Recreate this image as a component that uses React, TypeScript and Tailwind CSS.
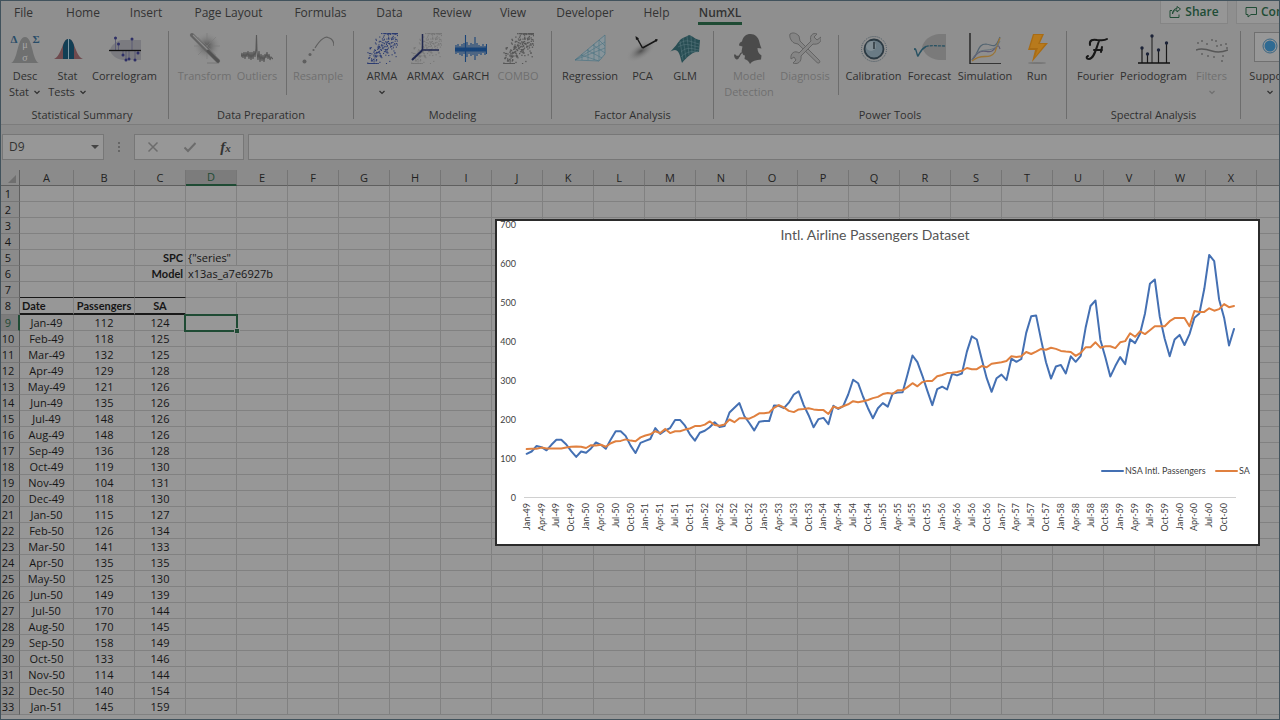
import type { ReactNode } from "react";

/* ---------- data ---------- */

const NSA = [
  112, 118, 132, 129, 121, 135, 148, 148, 136, 119, 104, 118,
  115, 126, 141, 135, 125, 149, 170, 170, 158, 133, 114, 140,
  145, 150, 178, 163, 172, 178, 199, 199, 184, 162, 146, 166,
  171, 180, 193, 181, 183, 218, 230, 242, 209, 191, 172, 194,
  196, 196, 236, 235, 229, 243, 264, 272, 237, 211, 180, 201,
  204, 188, 235, 227, 234, 264, 302, 293, 259, 229, 203, 229,
  242, 233, 267, 269, 270, 315, 364, 347, 312, 274, 237, 278,
  284, 277, 317, 313, 318, 374, 413, 405, 355, 306, 271, 306,
  315, 301, 356, 348, 355, 422, 465, 467, 404, 347, 305, 336,
  340, 318, 362, 348, 363, 435, 491, 505, 404, 359, 310, 337,
  360, 342, 406, 396, 420, 472, 548, 559, 463, 407, 362, 405,
  417, 391, 419, 461, 472, 535, 622, 606, 508, 461, 390, 432,
];

const SA = [
  124, 125, 125, 128, 126, 126, 126, 126, 128, 130, 131, 130,
  127, 134, 133, 135, 130, 139, 144, 145, 149, 146, 144, 154,
  159, 162, 170, 165, 176, 165, 170, 170, 174, 177, 183, 183,
  187, 195, 186, 184, 187, 200, 193, 203, 203, 202, 208, 216,
  216, 218, 230, 237, 231, 222, 219, 226, 227, 229, 226, 224,
  224, 214, 233, 229, 234, 239, 247, 244, 247, 250, 255, 258,
  265, 268, 266, 275, 275, 283, 293, 285, 296, 299, 299, 311,
  314, 319, 320, 322, 325, 332, 329, 329, 337, 334, 343, 345,
  347, 350, 362, 360, 362, 373, 368, 374, 381, 379, 384, 381,
  376, 374, 373, 363, 371, 385, 385, 398, 384, 388, 388, 383,
  398, 401, 421, 412, 426, 419, 429, 439, 439, 439, 452, 460,
  460, 460, 439, 478, 476, 476, 485, 479, 483, 496, 488, 491,
];

const MONTHS = ["Jan", "Feb", "Mar", "Apr", "May", "Jun", "Jul", "Aug", "Sep", "Oct", "Nov", "Dec"];
const monthLabel = (i: number) => `${MONTHS[i % 12]}-${49 + Math.floor(i / 12)}`;

const COLUMNS = "ABCDEFGHIJKLMNOPQRSTUVWX".split("");
const ROWS = Array.from({ length: 33 }, (_, i) => i + 1);

/* ---------- icons ---------- */

function Icon({ children }: { children: ReactNode }) {
  return (
    <svg className="h-8 w-8" viewBox="0 0 32 32" fill="none" aria-hidden="true">
      {children}
    </svg>
  );
}

function makeCloud(count: number, seed: number) {
  let s = seed;
  const next = () => {
    s = (s * 16807) % 2147483647;
    return s / 2147483647;
  };
  return Array.from({ length: count }, () => {
    const x = next() * 30 + 1;
    const spread = (next() + next() + next() - 1.5) * 17;
    const y = Math.min(31, Math.max(1, 32 - x * 0.95 + spread));
    return [x, y] as const;
  });
}
const CLOUD = makeCloud(230, 4321);

function Cloud({ color, size = 1.1 }: { color: string; size?: number }) {
  return (
    <g fill={color}>
      {CLOUD.map(([x, y], i) => (
        <rect key={i} x={x} y={y} width={size} height={size} />
      ))}
    </g>
  );
}

const DescIcon = () => (
  <Icon>
    <path d="M2 31C9 29 8 5 16 5S23 29 30 31Z" fill="#6f7070" />
    <text x="16" y="16" textAnchor="middle" fontSize="10" fill="#a8a8a8" fontFamily="Liberation Serif">μ</text>
    <text x="16" y="29" textAnchor="middle" fontSize="10" fill="#a8a8a8" fontFamily="Liberation Serif">σ</text>
    <text x="5" y="11" textAnchor="middle" fontSize="11" fontWeight="700" fill="#284c68" fontFamily="Liberation Serif">Δ</text>
    <text x="27" y="11" textAnchor="middle" fontSize="11" fontWeight="700" fill="#284c68" fontFamily="Liberation Serif">Σ</text>
  </Icon>
);
const StatIcon = () => (
  <Icon>
    <path d="M2 27C10 24 10 7 16.5 7S23 24 31 27Z" fill="#6f4a4e" />
    <path d="M11 27V13.5C12.5 9 14 7 16.5 7S20.500 9 22 13.500V27Z" fill="#123f55" />
    <path d="M16.500 7V27" stroke="#7d98a5" />
  </Icon>
);
const CorrelogramIcon = () => (
  <Icon>
    <path d="M32 8H12C6 10 2 14 1 18C2 23 7 27 14 28H32Z" fill="#7b7b80" />
    <path d="M6.500 6V18M9.500 12V18M23 8V18M14 18V23M17 18V28M20 18V27M26 18V28M29 18V21" stroke="#5d5d75" />
    <path d="M0 18.500H32" stroke="#111" strokeWidth="1.300" />
    <g fill="#2e2f66">
      {[[6.5, 6], [9.5, 12], [23, 7], [14, 23], [17, 28], [20, 27], [26, 28], [29, 21]].map(([x, y]) => (
        <circle key={x} cx={x} cy={y} r="1.500" />
      ))}
    </g>
  </Icon>
);
const TransformIcon = () => (
  <Icon>
    <defs>
      <radialGradient id="glow">
        <stop offset="0" stopColor="#4c4c4c" />
        <stop offset="1" stopColor="#8f8f8f" stopOpacity="0" />
      </radialGradient>
    </defs>
    <circle cx="18" cy="14" r="14" fill="url(#glow)" />
    <path d="M18 1V27M5 14H31M9 5L27 23M27 5L9 23" stroke="#7b7b7b" strokeWidth=".6" />
    <path d="M18 31H30" stroke="#777" />
    <path d="M3 3L29 29" stroke="#636363" strokeWidth="4" strokeLinecap="round" />
    <path d="M4 3L28 27" stroke="#8c8c8c" strokeWidth="1.200" />
    <path d="M19 19L29 29" stroke="#525252" strokeWidth="3" strokeLinecap="round" />
  </Icon>
);
const OutliersIcon = () => (
  <Icon>
    <path d="M0 25L1 21L2 26L3 20L4 27L5 20L6 25L7 19L8 27L9 20L10 28L11 20L12 27L13 19L14 25L15 17L15.500 3L16 20L17 28L18 19L19 30L20 22L21 29L22 23L23 30L24 22L25 26L26 20L27 27L28 22L29 28L30 25L32 27" stroke="#585858" strokeWidth="1.100" />
  </Icon>
);
const ResampleIcon = () => (
  <Icon>
    <circle cx="2.500" cy="29.500" r="2" fill="#5f5f5f" />
    <circle cx="8" cy="22.500" r="1.500" fill="#5f5f5f" />
    <circle cx="11.500" cy="18" r="1.100" fill="#5f5f5f" />
    <path d="M13 16C19 6 24 4.500 26 5.500C30 6.500 32 10 32 14" stroke="#5f5f5f" strokeWidth="1.200" />
  </Icon>
);
const ArmaIcon = () => (
  <Icon>
    <Cloud color="#2c3c72" />
  </Icon>
);
const ArmaxIcon = () => (
  <Icon>
    <Cloud color="#777" />
    <path d="M12.500 18V2M12.500 18H29" stroke="#20284f" strokeWidth="1.500" />
    <path d="M12.500 18L2 28" stroke="#20284f" strokeWidth="2" />
  </Icon>
);
const GarchIcon = () => (
  <Icon>
    <path d="M0 17.500H32" stroke="#184479" strokeWidth="4" />
    <path d="M1 13V22M3 12V21M5 14V23M7 12V24M9 11V22M10.500 3V30M12 10V25M14 13V22M16 11V24M18 12V23M20 5V28M22 11V24M24 13V22M26 14V23M28 12V21M30 14V23M31.500 12V22" stroke="#184479" strokeWidth="1.100" />
  </Icon>
);
const ComboIcon = () => (
  <Icon>
    <Cloud color="#575757" size={1.3} />
  </Icon>
);
const RegressionIcon = () => (
  <Icon>
    <path d="M1 28L31 3V22L25 29Z" fill="#87949a" stroke="#4a7282" strokeWidth=".7" />
    <path d="M1 28L31 10M1 28L31 16M7 23L25 29M13 18L28 26M19 13L31 21M25 8L31 14M8 28V22M14 28V17M20 28V12M25 28V8" stroke="#4a7282" strokeWidth=".6" />
  </Icon>
);
const PcaIcon = () => (
  <Icon>
    <defs>
      <radialGradient id="shade">
        <stop offset="0" stopColor="#505050" />
        <stop offset="1" stopColor="#8f8f8f" stopOpacity="0" />
      </radialGradient>
    </defs>
    <ellipse cx="14" cy="19" rx="17" ry="8" transform="rotate(-32 14 19)" fill="url(#shade)" />
    <path d="M15.500 16L10 6M15.500 16L30 8" stroke="#161616" strokeWidth="1.500" />
    <path d="M8.500 4L12 6.500L9 8ZM31 7.500L28 7L29 10Z" fill="#161616" />
  </Icon>
);
const GlmIcon = () => (
  <Icon>
    <path d="M1 20C6 15 8 12 11 8C14 5 17 5 20 3C24 4 27 8 31 8L30 20C25 19 19 24 13 31C11 25 11 19 6 18C4 18 2 19 1 20Z" fill="#284e54" />
    <path d="M11 9L14 28M14 6L17 26M18 4L20 23M22 4L23 21M26 7L26 19M10 12C17 6 22 10 30 12M9 15C17 10 23 14 30 15M12 20C18 14 24 17 30 18M12 25C18 19 24 19 29 20" stroke="#5c7b80" strokeWidth=".5" />
  </Icon>
);
const ModelIcon = () => (
  <Icon>
    <path d="M6 13.500C6 11 7.500 10 9 9.500C10 4.500 13 2 17.500 2S25.500 5 26.500 10.500C27 13 28 15 28.500 16.500L24.500 16C24.500 19 25.500 22 28.500 23.500L28 27.500C23 28 19 29 17 32C16 29.500 14 27.500 11.500 27L12 23.500C10 23.500 9.300 22 9.700 20.500L8.500 19.500L9.500 14.500Z" fill="#4b4b4b" />
    <path d="M10 20.500C7 20.500 7 23 6 25" stroke="#4b4b4b" strokeWidth="1.200" />
    <path d="M1 22.500H2.500C3 24 4.500 24 6 23.500C6.500 26 5.500 27.500 3.500 27.500C2 27 1 25 1 22.500Z" fill="#4b4b4b" />
  </Icon>
);
const DiagnosisIcon = () => (
  <Icon>
    <path d="M1 2C4 0 7 1 10 4L11 9L30 28C32 30 30 32 28 30.500L9 12L5 11C2 9 0 5 1 2Z" fill="#858585" stroke="#606060" strokeWidth=".9" />
    <path d="M22 9C20 4 24 0 28 2L25 5L28 8L32 5C33 10 29 13 24 12L12 24C13 30 8 33 4 31L7 28L5 25L2 27C1 21 6 18 10 21Z" fill="#858585" stroke="#606060" strokeWidth=".9" />
  </Icon>
);
const CalibrationIcon = () => (
  <Icon>
    <circle cx="16" cy="17" r="12.500" stroke="#4b5a64" strokeDasharray="1 1" />
    <circle cx="16" cy="17" r="9.500" fill="#6a7b85" stroke="#2b3942" strokeWidth="1.800" />
    <circle cx="13" cy="14" r="5" fill="#909a9f" fillOpacity=".6" />
    <path d="M16 10V17" stroke="#1e272d" strokeWidth="1.300" />
  </Icon>
);
const ForecastIcon = () => (
  <Icon>
    <path d="M32 2H25C16 3 10 8 8 15C10 22 16 27 25 28H32Z" fill="#7a7a7a" />
    <path d="M0 18C2 13 3 25 4 24C6 21 7 17 12 14.500" stroke="#285263" strokeWidth="1.400" />
    <path d="M12 14.500C17 13 23 14 32 14" stroke="#285263" strokeWidth="1.300" strokeDasharray="3 1" />
  </Icon>
);
const SimulationIcon = () => (
  <Icon>
    <path d="M3 28C10 22 8 12 17 12C24 13 26 18 31 5" stroke="#536471" strokeWidth="1.200" />
    <path d="M3 28C13 13 17 22 23 19C28 16 29 10 31 17" stroke="#5d5872" strokeWidth="1.200" />
    <path d="M3 29C13 20 20 29 26 20C28 14 29 11 31 6" stroke="#9b7435" strokeWidth="1.300" />
    <path d="M3 28C11 12 20 23 29 13L31 9" stroke="#64747d" />
    <path d="M1 1V32H32" stroke="#191919" strokeWidth="1.300" />
  </Icon>
);
const RunIcon = () => (
  <Icon>
    <ellipse cx="16" cy="31" rx="9" ry="1" fill="#777" />
    <path d="M12 2H23L19 11H27L11 30L14 18H7Z" fill="#a96c14" />
    <path d="M13 3H21L17 12H24L14 25L17 16H9Z" fill="#b87a1c" />
  </Icon>
);
const FourierIcon = () => (
  <Icon>
    <path d="M10 13C9 8 13 7 17 8C21 8 24 9 27 7M19 9C16 17 14 27 9 27C6 27 6 25 8 24M14 18H22M22 15L21 20" stroke="#171717" strokeWidth="2" strokeLinecap="round" />
  </Icon>
);
const PeriodogramIcon = () => (
  <Icon>
    <path d="M4 17V31M9.500 23V31M20.500 19V31M28.500 12V31" stroke="#191919" strokeWidth="1.200" />
    <path d="M14 5V31" stroke="#555" strokeWidth="2" />
    <path d="M0 31H32" stroke="#111" strokeWidth="1.500" />
    <g fill="#1c2338">
      {[[4, 16], [9.5, 22], [14, 4], [20.5, 18], [28.5, 11]].map(([x, y]) => (
        <circle key={x} cx={x} cy={y} r="1.700" />
      ))}
    </g>
  </Icon>
);
const FiltersIcon = () => (
  <Icon>
    <path d="M0 18C5 16 10 17 16 19C22 21 27 20 32 18" stroke="#575757" strokeWidth="1.600" />
    <g fill="#606060">
      {[[2, 11], [6, 9], [11, 12], [16, 8], [20, 9], [25, 13], [30, 12], [6, 22], [12, 24], [18, 25], [27, 24], [31, 16], [26, 29], [21, 14]].map(([x, y]) => (
        <circle key={`${x}-${y}`} cx={x} cy={y} r="1" />
      ))}
    </g>
  </Icon>
);
const SupportIcon = () => (
  <Icon>
    <rect x=".5" y=".5" width="31" height="29" fill="#989898" stroke="#707070" />
    <circle cx="16" cy="14" r="7" stroke="#3a6683" />
    <circle cx="16" cy="14" r="5.500" fill="#2f6a92" />
  </Icon>
);

function Caret() {
  return (
    <svg className="h-2 w-2" viewBox="0 0 8 8" fill="none" stroke="currentColor" strokeWidth="1.200" aria-hidden="true">
      <path d="M1.500 3L4 5.500L6.500 3" />
    </svg>
  );
}

/* ---------- ribbon ---------- */

const TABS = [
  { name: "File", width: "w-[47px]" },
  { name: "Home", width: "w-[72px]" },
  { name: "Insert", width: "w-[54px]" },
  { name: "Page Layout", width: "w-[111px]" },
  { name: "Formulas", width: "w-[73px]" },
  { name: "Data", width: "w-[65px]" },
  { name: "Review", width: "w-[60px]" },
  { name: "View", width: "w-[62px]" },
  { name: "Developer", width: "w-[82px]" },
  { name: "Help", width: "w-[61px]" },
  { name: "NumXL", width: "w-[66px]" },
];

function TabBar() {
  return (
    <div className="flex h-[27px] text-xs">
      <nav className="flex flex-1" aria-label="Ribbon tabs">
        {TABS.map((t) => {
          const active = t.name === "NumXL";
          return (
            <button key={t.name} className={`${t.width} flex shrink-0 justify-center whitespace-nowrap`}>
              <span className={active ? "h-6 border-b-[3px] border-[#1f4b34] px-px font-semibold leading-6" : "leading-6"}>{t.name}</span>
            </button>
          );
        })}
      </nav>
      <div className="flex h-[23px] shrink-0 gap-2 font-semibold text-[#204c35]">
        <button className="flex w-[68px] items-center justify-center gap-1 border-x border-b border-[#858585] bg-[#969696]">
          <svg className="h-3 w-3" viewBox="0 0 12 12" fill="none" stroke="currentColor" aria-hidden="true">
            <path d="M3 4.500H1V11.500H10V8.500M3.500 8C4 5 6 4 8 4V6L11.500 3L8 .5V2.500C5 2.500 3.500 5 3.500 8Z" />
          </svg>
          Share
        </button>
        <button className="flex w-11 items-center gap-1 overflow-hidden border-b border-l border-[#858585] bg-[#969696] pl-2" aria-label="Comments">
          <svg className="h-3 w-3 shrink-0" viewBox="0 0 12 12" fill="none" stroke="currentColor" aria-hidden="true">
            <path d="M1 1.500H11.500V8.500H6L3 11V8.500H1Z" />
          </svg>
          Comments
        </button>
      </div>
    </div>
  );
}

type ToolProps = { icon: ReactNode; label: string; second?: string; width: string; caret?: boolean; disabled?: boolean };

function Tool({ icon, label, second, width, caret, disabled }: ToolProps) {
  return (
    <button
      disabled={disabled}
      className={`${width} flex shrink-0 flex-col items-center whitespace-nowrap pt-px leading-4 ${disabled ? "text-[#6f6f6f]" : "text-[#2f2f2f]"}`}
    >
      {icon}
      <span className="mt-1">{label}</span>
      {(second || caret) && (
        <span className="flex h-4 items-center gap-1">
          {second}
          {caret && <Caret />}
        </span>
      )}
    </button>
  );
}

function Group({ title, width, children }: { title: string; width: string; children: ReactNode }) {
  return (
    <section className={`${width} flex h-[88px] shrink-0 flex-col border-r border-[#6d6d6d]`} aria-label={title}>
      <div className="flex h-[76px] shrink-0 justify-center">{children}</div>
      <h2 className="text-center leading-4 text-[#2f2f2f]">{title}</h2>
    </section>
  );
}

const Divider = () => <div className="mx-1 mt-1 h-[60px] border-r border-[#6d6d6d]" />;

function Ribbon() {
  return (
    <div className="flex h-[97px] shrink-0 overflow-hidden border-b border-[#7c7c7c] pt-[3px] text-[11px]">
      <Group title="Statistical Summary" width="w-[169px] pr-1">
        <Tool icon={<DescIcon />} label="Desc" second="Stat" caret width="w-[43px]" />
        <Tool icon={<StatIcon />} label="Stat" second="Tests" caret width="w-[42px]" />
        <Tool icon={<CorrelogramIcon />} label="Correlogram" width="w-[72px]" />
      </Group>
      <Group title="Data Preparation" width="w-[185px]">
        <Tool icon={<TransformIcon />} label="Transform" width="w-[56px]" disabled />
        <Tool icon={<OutliersIcon />} label="Outliers" width="w-[49px]" disabled />
        <Divider />
        <Tool icon={<ResampleIcon />} label="Resample" width="w-[55px]" disabled />
      </Group>
      <Group title="Modeling" width="w-[198px]">
        <Tool icon={<ArmaIcon />} label="ARMA" caret width="w-[40px]" />
        <Tool icon={<ArmaxIcon />} label="ARMAX" width="w-[47px]" />
        <Tool icon={<GarchIcon />} label="GARCH" width="w-[44px]" />
        <Tool icon={<ComboIcon />} label="COMBO" width="w-[50px]" disabled />
      </Group>
      <Group title="Factor Analysis" width="w-[162px]">
        <Tool icon={<RegressionIcon />} label="Regression" width="w-[60px]" />
        <Tool icon={<PcaIcon />} label="PCA" width="w-[45px]" />
        <Tool icon={<GlmIcon />} label="GLM" width="w-[40px]" />
      </Group>
      <Group title="Power Tools" width="w-[353px]">
        <Tool icon={<ModelIcon />} label="Model" second="Detection" width="w-[55px]" disabled />
        <Tool icon={<DiagnosisIcon />} label="Diagnosis" width="w-[57px]" disabled />
        <Divider />
        <Tool icon={<CalibrationIcon />} label="Calibration" width="w-[62px]" />
        <Tool icon={<ForecastIcon />} label="Forecast" width="w-[50px]" />
        <Tool icon={<SimulationIcon />} label="Simulation" width="w-[61px]" />
        <Tool icon={<RunIcon />} label="Run" width="w-[43px]" />
      </Group>
      <Group title="Spectral Analysis" width="w-[174px]">
        <Tool icon={<FourierIcon />} label="Fourier" width="w-[41px]" />
        <Tool icon={<PeriodogramIcon />} label="Periodogram" width="w-[75px]" />
        <Tool icon={<FiltersIcon />} label="Filters" caret width="w-[41px]" disabled />
      </Group>
      <div className="flex pl-1">
        <Tool icon={<SupportIcon />} label="Support" caret width="w-[50px]" />
      </div>
    </div>
  );
}

/* ---------- formula bar ---------- */

function FormulaBar() {
  return (
    <div className="flex h-[45px] shrink-0 items-start gap-1 pl-0.5 pt-[9px]">
      <div className="flex h-[26px] w-[102px] items-center border border-[#777] bg-[#979797] pr-1">
        <input className="w-full min-w-0 bg-transparent pl-1.5 text-xs outline-none" defaultValue="D9" aria-label="Name box" />
        <button aria-label="Open name list">
          <svg className="h-2 w-2" viewBox="0 0 8 8" fill="#444" aria-hidden="true"><path d="M0 2H8L4 6Z" /></svg>
        </button>
      </div>
      <svg className="h-[26px] w-[22px]" viewBox="0 0 22 26" fill="#666" aria-hidden="true">
        <path d="M10 8h2v2h-2zM10 12h2v2h-2zM10 16h2v2h-2z" />
      </svg>
      <div className="flex h-[26px] w-[110px] items-center justify-around border border-[#777] bg-[#979797]">
        <button aria-label="Cancel">
          <svg className="h-3 w-3" viewBox="0 0 12 12" stroke="#6c6c6c" strokeWidth="1.500" aria-hidden="true"><path d="M1.500 1.500L10.500 10.500M10.500 1.500L1.500 10.500" /></svg>
        </button>
        <button aria-label="Enter">
          <svg className="h-3 w-3" viewBox="0 0 12 12" fill="none" stroke="#6c6c6c" strokeWidth="2" aria-hidden="true"><path d="M.5 6.500L4 10L11.500 2" /></svg>
        </button>
        <button className="font-['Liberation_Serif',serif] text-[15px] font-bold italic leading-4 text-[#333]" aria-label="Insert function">
          f<span className="text-[11px]">x</span>
        </button>
      </div>
      <input className="h-[26px] min-w-0 flex-1 border border-r-0 border-[#777] bg-[#979797] px-1 text-xs outline-none" aria-label="Formula" />
    </div>
  );
}

/* ---------- sheet ---------- */

function cellContent(row: number, col: string): string {
  if (row === 5 && col === "C") return "SPC";
  if (row === 5 && col === "D") return '{"series"';
  if (row === 6 && col === "C") return "Model";
  if (row === 6 && col === "D") return "x13as_a7e6927b";
  if (row === 8) return col === "A" ? "Date" : col === "B" ? "Passengers" : col === "C" ? "SA" : "";
  if (row >= 9) {
    const i = row - 9;
    if (col === "A") return monthLabel(i);
    if (col === "B") return String(NSA[i]);
    if (col === "C") return String(SA[i]);
  }
  return "";
}

const BOLD = "font-['Lato',sans-serif] font-bold";

function cellClass(row: number, col: string): string {
  const inTable = col === "A" || col === "B" || col === "C";
  const list = ["border-r border-b p-0 whitespace-nowrap"];
  if (row === 7 && inTable) list.push("border-r-[#818181] border-b-[#181818]");
  else if (row === 8 && inTable) list.push(`border-r-[#818181] border-b-2 border-b-[#181818] ${BOLD}`);
  else if (row === 6 && col === "D") list.push("border-b-[#818181] border-r-transparent");
  else list.push("border-[#818181]");
  if (row === 5 || row === 6) list.push(col === "C" ? `text-right pr-0.5 ${BOLD}` : "pl-0.5");
  else if (row === 8 && col === "A") list.push("pl-0.5 text-left");
  else list.push("text-center");
  return list.join(" ");
}

function Sheet() {
  return (
    <table className="w-[1308px] table-fixed border-separate border-spacing-0 text-[11px] leading-[14px] text-[#161616]">
      <colgroup>
        <col className="w-[20px]" />
        {COLUMNS.map((c) => (
          <col key={c} className={c === "A" ? "w-[54px]" : c === "B" ? "w-[61px]" : "w-[51px]"} />
        ))}
        <col className="w-[51px]" />
      </colgroup>
      <thead>
        <tr className="h-4">
          <th className="border-b border-r border-[#5f5f5f] p-0">
            <svg className="ml-2 h-3 w-2.5" viewBox="0 0 10 12" fill="#6f6f6f" aria-hidden="true"><path d="M8 3V11H0Z" /></svg>
          </th>
          {COLUMNS.map((c) => (
            <th
              key={c}
              scope="col"
              className={
                c === "D"
                  ? "border-b-2 border-r border-b-[#1f4b34] border-r-[#777] bg-[#7c7c7c] p-0 font-normal text-[#1f4b34]"
                  : "border-b border-r border-b-[#5f5f5f] border-r-[#757575] p-0 font-normal text-[#222]"
              }
            >
              {c}
            </th>
          ))}
          <th className="border-b border-[#5f5f5f] p-0" />
        </tr>
      </thead>
      <tbody className="bg-[#979797]">
        {ROWS.map((r) => (
          <tr key={r} className={r === 8 ? "h-[17px]" : "h-4"}>
            <th
              scope="row"
              className={`border-b p-0 text-center font-normal ${
                r === 9
                  ? "border-r-2 border-b-[#777] border-r-[#1f4b34] bg-[#7c7c7c] text-[#1f4b34]"
                  : "border-r border-b-[#777] border-r-[#5f5f5f] bg-[#8b8b8b]"
              }`}
            >
              <span className="block w-4">{r}</span>
            </th>
            {COLUMNS.map((c) => (
              <td key={c} className={cellClass(r, c)}>
                {r === 9 && c === "D" ? (
                  <div className="relative h-[15px]">
                    <div className="absolute -left-0.5 -top-px h-[18px] w-[54px] border-2 border-[#1f4b34]">
                      <div className="absolute -bottom-1 -right-1 h-[6px] w-[6px] border border-[#979797] bg-[#1f4b34]" />
                    </div>
                  </div>
                ) : (
                  cellContent(r, c) && <div className="h-[14px] w-full">{cellContent(r, c)}</div>
                )}
              </td>
            ))}
            <td className="border-b border-[#818181] p-0" />
          </tr>
        ))}
      </tbody>
    </table>
  );
}

/* ---------- chart ---------- */

const px = (i: number) => 29.7 + i * 4.946;
const py = (v: number) => 276.5 - v * 0.39;
const line = (values: number[]) => values.map((v, i) => `${px(i).toFixed(1)},${py(v).toFixed(1)}`).join(" ");

function Chart() {
  return (
    <svg
      className="h-[323px] w-[761px] bg-white font-['Lato',sans-serif]"
      viewBox="0 0 761 323"
      role="img"
      aria-label="Intl. Airline Passengers Dataset"
    >
      <g fill="#3f3f3f" fontSize="9">
        {[0, 100, 200, 300, 400, 500, 600, 700].map((v) => (
          <text key={v} x="19" y={py(v) + 3} textAnchor="end">{v}</text>
        ))}
        {NSA.map((_, i) =>
          i % 3 === 0 ? (
            <text key={i} transform={`translate(${px(i) + 3} 282) rotate(-90)`} textAnchor="end">{monthLabel(i)}</text>
          ) : null,
        )}
      </g>
      <text x="378" y="19" textAnchor="middle" fontSize="14" fill="#555">Intl. Airline Passengers Dataset</text>
      <path d="M27 276.500H739" stroke="#d0d0d0" />
      <g fill="none" strokeWidth="2" strokeLinejoin="round" strokeLinecap="round">
        <polyline points={line(NSA)} stroke="#4470b3" />
        <polyline points={line(SA)} stroke="#e0803f" />
        <path d="M605 250H626" stroke="#4470b3" />
        <path d="M719 250H740" stroke="#e0803f" />
      </g>
      <g fontSize="9" fill="#3f3f3f">
        <text x="628" y="253">NSA Intl. Passengers</text>
        <text x="742" y="253">SA</text>
      </g>
    </svg>
  );
}

export default function App() {
  return (
    <div className="relative flex h-screen flex-col overflow-hidden bg-[#8b8b8b] pt-px font-['Open_Sans','Noto_Sans',sans-serif] text-[#333]">
      <header className="shrink-0 bg-[#8f8f8f]">
        <TabBar />
        <Ribbon />
      </header>
      <FormulaBar />
      <main className="relative min-h-0 flex-1 overflow-hidden bg-[#979797]">
        <div className="bg-[#8b8b8b]">
          <Sheet />
        </div>
        <div className="absolute left-[495px] top-[49px] border-2 border-[#2b2b2b]">
          <Chart />
        </div>
      </main>
      <div className="pointer-events-none absolute inset-0 border border-[#41525c]" />
    </div>
  );
}
